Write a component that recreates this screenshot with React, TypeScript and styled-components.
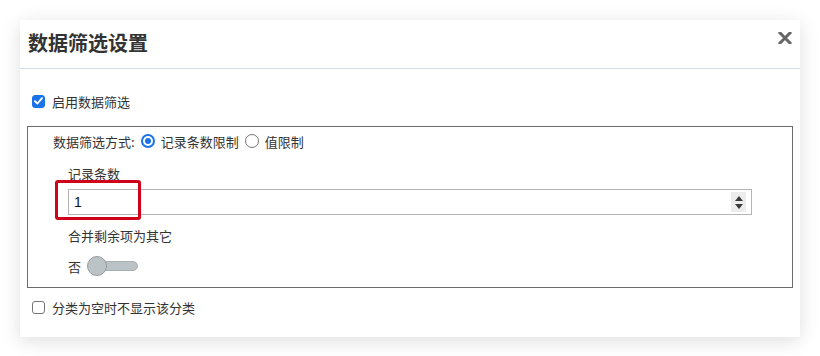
import React from "react";
import styled, { createGlobalStyle } from "styled-components";

const Global = createGlobalStyle`
  html, body { margin: 0; padding: 0; background: #fff; }
  body { font-family: "Noto Sans CJK SC", "Noto Sans", sans-serif; color: #333; }
`;

const Page = styled.div`
  padding: 20px;
  width: 780px;
`;

const Dialog = styled.div`
  width: 780px;
  background: #fff;
  box-shadow: 0 4px 18px rgba(0, 0, 0, 0.13);
`;

const Header = styled.div`
  height: 49px;
  box-sizing: border-box;
  border-bottom: 1px solid #d5dde3;
  display: flex;
  align-items: center;
  justify-content: space-between;
  padding: 0 8px 3px 8px;
`;

const Title = styled.h1`
  margin: 0;
  font-size: 20px;
  font-weight: 700;
  color: #333;
  line-height: 24px;
`;

const CloseBtn = styled.button`
  border: none;
  background: none;
  padding: 0;
  width: 14px;
  height: 12px;
  margin-right: 0;
  margin-bottom: 10px;
  display: flex;
  cursor: pointer;
`;

const Body = styled.div`
  padding: 22px 7px 20px 7px;
`;

const CheckRow = styled.label<{ $top?: number }>`
  display: flex;
  align-items: center;
  height: 20px;
  padding-left: 5px;
  margin-top: ${(p) => p.$top ?? 0}px;
  font-size: 13px;
  gap: 7px;
`;

const Box = styled.span<{ $checked: boolean }>`
  width: 13px;
  height: 13px;
  box-sizing: border-box;
  border-radius: 3px;
  display: inline-flex;
  align-items: center;
  justify-content: center;
  background: ${(p) => (p.$checked ? "#1a73e8" : "#fff")};
  border: 1px solid ${(p) => (p.$checked ? "#1a73e8" : "#767676")};
`;

const Fieldset = styled.div`
  margin-top: 15px;
  border: 1px solid #6b6b6b;
  padding: 4px 0 11px 0;
`;

const MethodRow = styled.div`
  display: flex;
  align-items: center;
  height: 20px;
  padding-left: 25px;
  font-size: 13px;
`;

const RadioLabel = styled.label`
  display: inline-flex;
  align-items: center;
  gap: 6px;
  margin-left: 6px;
`;

const Radio = styled.span<{ $checked: boolean }>`
  width: 14px;
  height: 14px;
  box-sizing: border-box;
  border-radius: 50%;
  border: ${(p) => (p.$checked ? "2px solid #1a73e8" : "1px solid #767676")};
  display: inline-flex;
  align-items: center;
  justify-content: center;
  &::after {
    content: "";
    display: ${(p) => (p.$checked ? "block" : "none")};
    width: 6px;
    height: 6px;
    border-radius: 50%;
    background: #1a73e8;
  }
`;

const FieldLabel = styled.div<{ $top: number }>`
  height: 20px;
  line-height: 20px;
  margin-top: ${(p) => p.$top}px;
  padding-left: 40px;
  font-size: 13px;
`;

const InputArea = styled.div`
  position: relative;
  margin: 5px 40px 0 40px;
`;

const InputWrap = styled.div`
  height: 26px;
  box-sizing: border-box;
  border: 1px solid #b4b4b4;
  display: flex;
  align-items: center;
  padding-right: 5px;
`;

const Input = styled.input`
  flex: 1;
  border: none;
  outline: none;
  font-family: "Liberation Sans", Arial, sans-serif;
  font-size: 14px;
  color: #111;
  padding: 0 0 0 5px;
  background: transparent;
`;

const Spinner = styled.div`
  width: 15px;
  height: 20px;
  background: #ececec;
  display: flex;
  flex-direction: column;
  align-items: center;
  justify-content: center;
  gap: 3px;
`;

const Highlight = styled.div`
  position: absolute;
  left: -13px;
  top: -9px;
  width: 86px;
  height: 40px;
  box-sizing: border-box;
  border: 3px solid #d0021b;
  border-radius: 3px;
  pointer-events: none;
`;

const SwitchRow = styled.div`
  display: flex;
  align-items: center;
  height: 20px;
  margin-top: 10px;
  padding-left: 40px;
  font-size: 13px;
  gap: 6px;
`;

const Track = styled.span`
  position: relative;
  width: 49px;
  height: 10px;
  box-sizing: border-box;
  border-radius: 5px;
  background: #bcc3c6;
  border: 1px solid #a8afb2;
  margin-left: 2px;
`;

const Knob = styled.span`
  position: absolute;
  left: -3px;
  top: -6px;
  width: 20px;
  height: 20px;
  box-sizing: border-box;
  border-radius: 50%;
  background: #bcc3c6;
  border: 1px solid #959c9f;
`;

const Check = () => (
  <svg width="9" height="8" viewBox="0 0 9 8">
    <path d="M1 4.2 L3.5 6.5 L8 1.2" fill="none" stroke="#fff" strokeWidth="1.9" strokeLinecap="round" strokeLinejoin="round" />
  </svg>
);

const Tri = ({ up }: { up: boolean }) => (
  <svg width="8" height="5" viewBox="0 0 8 5">
    <path d={up ? "M0 5 L4 0 L8 5 Z" : "M0 0 L8 0 L4 5 Z"} fill="#3a3a3a" />
  </svg>
);

export default function App() {
  return (
    <>
      <Global />
      <Page>
        <Dialog>
          <Header>
            <Title>数据筛选设置</Title>
            <CloseBtn aria-label="close">
              <svg width="14" height="12" viewBox="0 0 14 12">
                <path d="M2 1 L12 11 M12 1 L2 11" stroke="#666" strokeWidth="3" strokeLinecap="square" />
              </svg>
            </CloseBtn>
          </Header>
          <Body>
            <CheckRow>
              <Box $checked={true}>
                <Check />
              </Box>
              启用数据筛选
            </CheckRow>
            <Fieldset>
              <MethodRow>
                数据筛选方式:
                <RadioLabel>
                  <Radio $checked={true} />
                  记录条数限制
                </RadioLabel>
                <RadioLabel>
                  <Radio $checked={false} />
                  值限制
                </RadioLabel>
              </MethodRow>
              <FieldLabel $top={13}>记录条数</FieldLabel>
              <InputArea>
                <InputWrap>
                  <Input defaultValue="1" />
                  <Spinner>
                    <Tri up={true} />
                    <Tri up={false} />
                  </Spinner>
                </InputWrap>
                <Highlight />
              </InputArea>
              <FieldLabel $top={11}>合并剩余项为其它</FieldLabel>
              <SwitchRow>
                否
                <Track>
                  <Knob />
                </Track>
              </SwitchRow>
            </Fieldset>
            <CheckRow $top={9}>
              <Box $checked={false} />
              分类为空时不显示该分类
            </CheckRow>
          </Body>
        </Dialog>
      </Page>
    </>
  );
}
